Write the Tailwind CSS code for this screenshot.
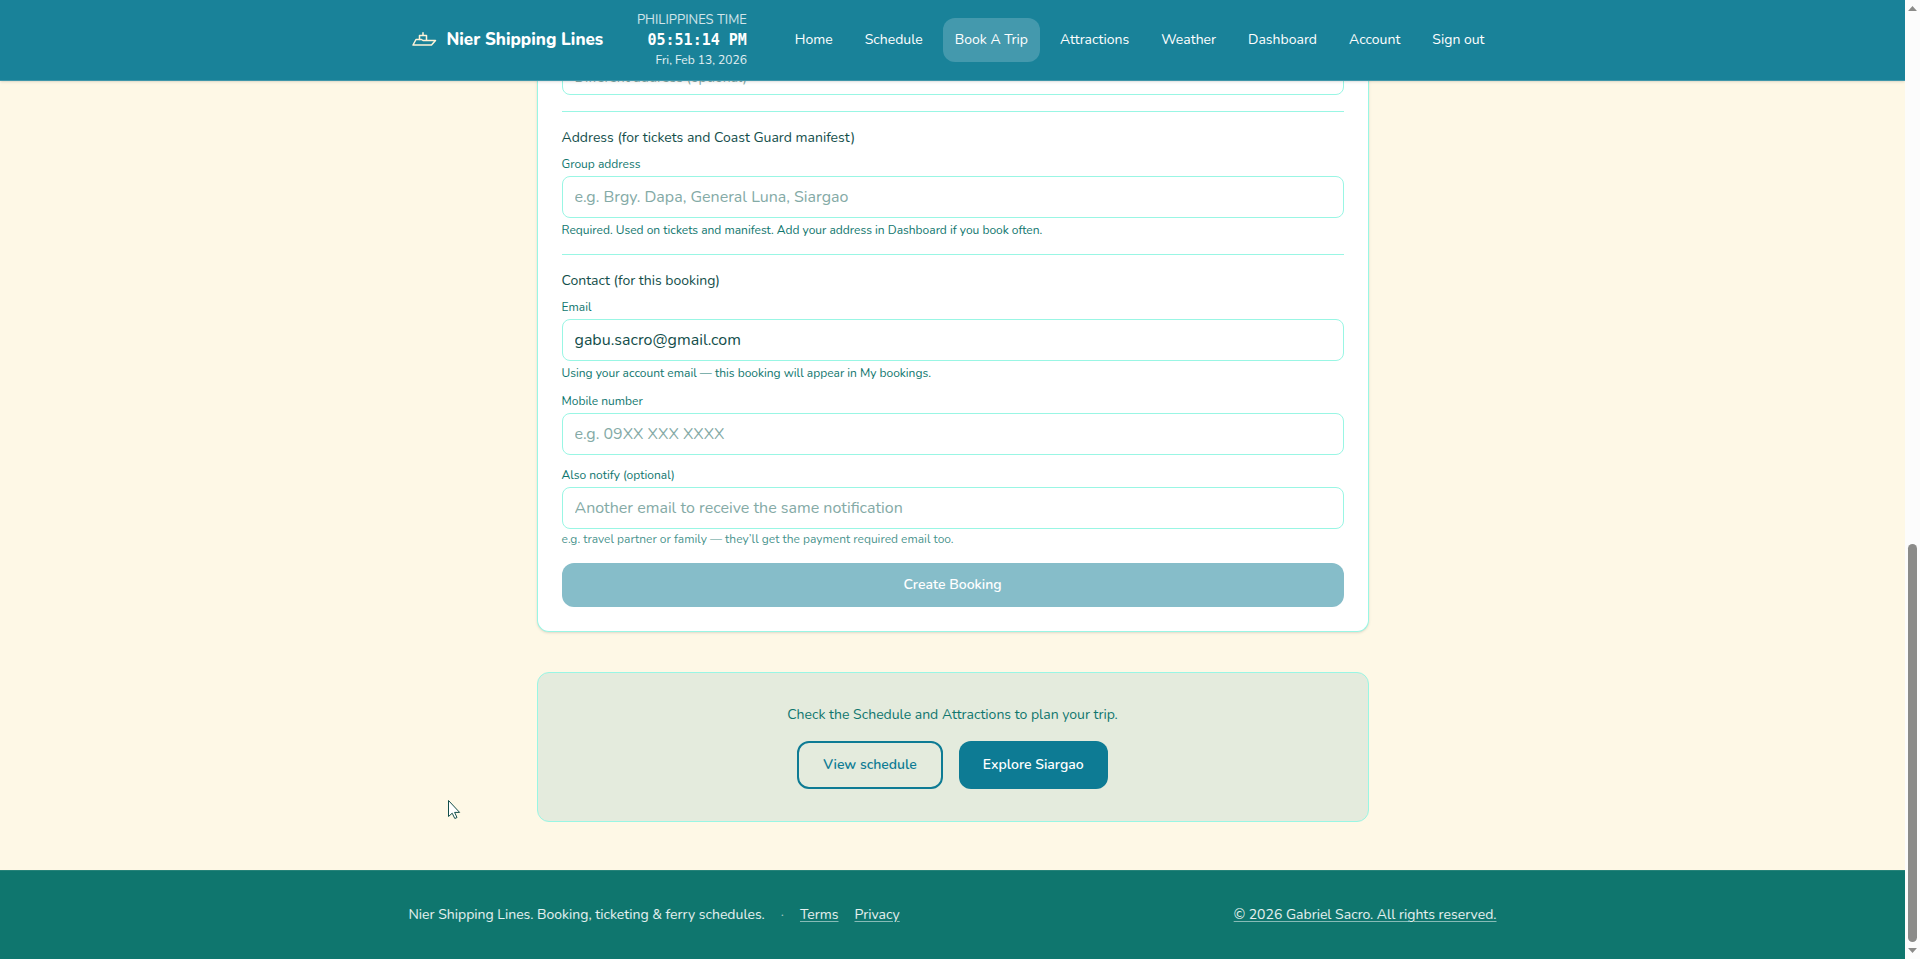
<!DOCTYPE html>
<html lang="en">
<head>
  <meta charset="UTF-8" />
  <meta name="viewport" content="width=device-width, initial-scale=1.0"/>
  <title>Book A Trip - Nier Shipping Lines</title>
  <script src="https://cdn.jsdelivr.net/npm/@tailwindcss/browser@4"></script>
</head>
<body class="min-h-screen flex flex-col bg-[#fef8e6] pr-[15px] font-[Nunito,Lato,sans-serif] text-[#134e4a]">

  <!-- Header -->
  <header class="sticky top-0 z-20 bg-[#198299] border-b border-[#3f96a9] shadow-sm">
    <div class="max-w-6xl mx-auto px-8 h-20 flex items-center justify-between">
      <a href="#" class="flex items-center gap-2.5 text-[17px] font-extrabold text-white">
        <svg class="w-7 h-7" viewBox="0 0 28 28" fill="none" stroke="#fef3d8" stroke-width="1.5" stroke-linejoin="round" stroke-linecap="round">
          <path d="M4 19h18.500l4-4.500H14l-1.500-1H7z" />
          <path d="M10.500 13.500v-4h7v4.500M14 9.500V6.700" />
        </svg>
        Nier Shipping Lines
      </a>
      <div class="flex items-center gap-9">
        <div class="text-right text-white">
          <div class="text-[13px] leading-5 text-white/80">PHILIPPINES TIME</div>
          <div id="ph-time" class="text-[15px] leading-5 font-bold font-[DejaVu_Sans_Mono,monospace]">05:51:14 PM</div>
          <div class="text-xs leading-5 text-white/90">Fri, Feb 13, 2026</div>
        </div>
        <nav class="flex items-center gap-2 text-sm text-white">
          <a href="#" class="px-3 py-3 rounded-xl">Home</a>
          <a href="#" class="px-3 py-3 rounded-xl">Schedule</a>
          <a href="#" class="px-3 py-3 rounded-xl bg-[#4499ad]">Book A Trip</a>
          <a href="#" class="px-3 py-3 rounded-xl">Attractions</a>
          <a href="#" class="px-3 py-3 rounded-xl">Weather</a>
          <a href="#" class="px-3 py-3 rounded-xl">Dashboard</a>
          <a href="#" class="px-3 py-3 rounded-xl">Account</a>
          <button type="button" class="px-3 py-3 rounded-xl">Sign out</button>
        </nav>
      </div>
    </div>
  </header>

  <main class="w-full max-w-4xl mx-auto px-8 -mt-6 pb-12 grow">
    <!-- Booking form -->
    <form class="bg-white border border-t-0 border-[#99f6e4] rounded-b-xl shadow-sm px-6 pb-6">
      <input type="text" aria-label="Different address" placeholder="Different address (optional)" class="block w-full rounded-lg border border-[#99f6e4] px-3 pt-2.5 pb-1.5 text-sm placeholder:text-[#84aaa6]" />

      <section class="mt-4 border-t border-[#99f6e4] pt-4">
        <h2 class="text-sm">Address (for tickets and Coast Guard manifest)</h2>
        <label for="address" class="block mt-2 text-xs text-[#0f766e]">Group address</label>
        <input id="address" type="text" placeholder="e.g. Brgy. Dapa, General Luna, Siargao" class="block mt-1 w-full rounded-lg border border-[#99f6e4] px-3 py-2 text-base placeholder:text-[#84aaa6]" />
        <p class="mt-1 text-xs text-[#0f766e]">Required. Used on tickets and manifest. Add your address in Dashboard if you book often.</p>
      </section>

      <section class="mt-4 border-t border-[#99f6e4] pt-4">
        <h2 class="text-sm">Contact (for this booking)</h2>
        <label for="email" class="block mt-2 text-xs text-[#0f766e]">Email</label>
        <input id="email" type="email" value="gabu.sacro@gmail.com" class="block mt-1 w-full rounded-lg border border-[#99f6e4] px-3 py-2 text-base" />
        <p class="mt-1 text-xs text-[#0f766e]">Using your account email — this booking will appear in My bookings.</p>

        <label for="mobile" class="block mt-3 text-xs text-[#0f766e]">Mobile number</label>
        <input id="mobile" type="tel" placeholder="e.g. 09XX XXX XXXX" class="block mt-1 w-full rounded-lg border border-[#99f6e4] px-3 py-2 text-base placeholder:text-[#84aaa6]" />

        <label for="notify" class="block mt-3 text-xs text-[#0f766e]">Also notify (optional)</label>
        <input id="notify" type="email" placeholder="Another email to receive the same notification" class="block mt-1 w-full rounded-lg border border-[#99f6e4] px-3 py-2 text-base placeholder:text-[#84aaa6]" />
        <p class="mt-0.5 text-xs text-[#0f766e]/80">e.g. travel partner or family — they’ll get the payment required email too.</p>
      </section>

      <button type="submit" disabled class="mt-4 w-full rounded-xl bg-[#86bdc9] py-3 text-sm font-semibold text-white">Create Booking</button>
    </form>

    <!-- Plan your trip -->
    <section class="mt-10 rounded-xl border border-[#99f6e4] bg-[#e4ebdd] p-8 text-center">
      <p class="text-sm text-[#0f766e]">Check the Schedule and Attractions to plan your trip.</p>
      <div class="mt-4 flex justify-center gap-4 text-sm font-semibold">
        <a href="#" class="rounded-xl border-2 border-[#0d7b94] px-6 py-3 text-[#0d7b94]">View schedule</a>
        <a href="#" class="rounded-xl bg-[#0d7b94] px-6 py-3.5 text-white">Explore Siargao</a>
      </div>
    </section>
  </main>

  <!-- Footer -->
  <footer class="bg-[#0f766e] border-t border-[#268379] text-sm text-white/90">
    <div class="max-w-6xl mx-auto px-8 py-8 flex items-center justify-between leading-6">
      <div class="flex items-center gap-4">
        <span>Nier Shipping Lines. Booking, ticketing &amp; ferry schedules.</span>
        <span class="text-white/60">·</span>
        <a href="#" class="underline decoration-white/50 underline-offset-2">Terms</a>
        <a href="#" class="underline decoration-white/50 underline-offset-2">Privacy</a>
      </div>
      <a href="#" class="underline decoration-white/50 underline-offset-2">© 2026 Gabriel Sacro. All rights reserved.</a>
    </div>
  </footer>

  <!-- Scrollbar -->
  <div class="fixed inset-y-0 right-0 z-30 w-[15px] bg-[#fcfcfc] flex flex-col items-center justify-between py-1.5" aria-hidden="true">
    <svg class="w-[9px] h-[5px]" viewBox="0 0 9 5" fill="#8b8b89"><path d="M4.500 0L9 5H0z" /></svg>
    <div class="flex h-full w-[9px] flex-col justify-end py-1.5">
      <div class="h-[43%] rounded-full bg-[#8b8b89]"></div>
    </div>
    <svg class="w-[9px] h-[5px]" viewBox="0 0 9 5" fill="#8b8b89"><path d="M0 0h9L4.500 5z" /></svg>
  </div>

  <!-- Mouse pointer -->
  <svg class="fixed left-[448px] top-[799px] z-40 w-[13px] h-[21px]" viewBox="0 0 13 21" fill="#fff" stroke="#134e4a" stroke-width="1" aria-hidden="true">
    <path d="M.5 1.500v16l3.700-3.300 2.600 5.300 2.200-1-2.400-5.100h5z" />
  </svg>

</body>
</html>
